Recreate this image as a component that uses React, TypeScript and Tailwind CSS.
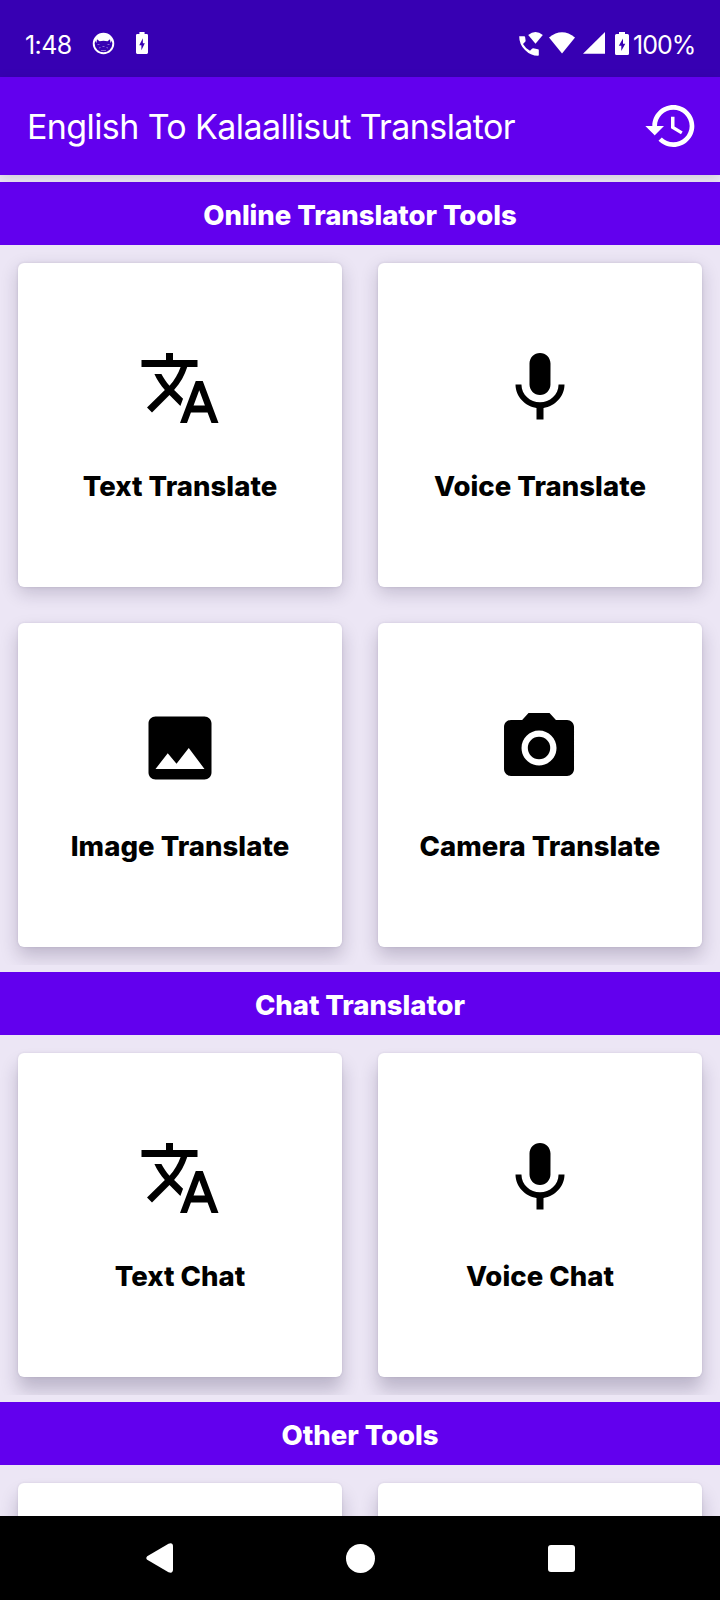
import type { ReactNode } from "react";

const icons = {
  translate: "M12.87 15.07l-2.54-2.51.03-.03c1.74-1.94 2.98-4.17 3.71-6.53H17V4h-7V2H8v2H1v1.99h11.17C11.5 7.92 10.44 9.75 9 11.35 8.07 10.32 7.3 9.19 6.69 8h-2c.73 1.63 1.73 3.17 2.98 4.56l-5.09 5.02L4 19l5-5 3.11 3.11.76-2.04zM18.5 10h-2L12 22h2l1.12-3h4.75L21 22h2l-4.5-12zm-2.62 7l1.62-4.33L19.12 17h-3.24z",
  mic: "M12 14c1.66 0 2.99-1.34 2.99-3L15 5c0-1.66-1.34-3-3-3S9 3.34 9 5v6c0 1.66 1.34 3 3 3zm5.3-3c0 3-2.54 5.1-5.3 5.1S6.7 14 6.7 11H5c0 3.41 2.72 6.23 6 6.72V21h2v-3.28c3.28-.48 6-3.3 6-6.72h-1.7z",
  image: "M21 19V5c0-1.1-.9-2-2-2H5c-1.1 0-2 .9-2 2v14c0 1.1.9 2 2 2h14c1.1 0 2-.9 2-2zM8.5 13.5l2.5 3.01L14.5 12l4.5 6H5l3.5-4.5z",
  camera: "M8.72 2L6.9 4H3.72c-1.1 0-2 .9-2 2v12c0 1.1.9 2 2 2h16c1.1 0 2-.9 2-2V6c0-1.1-.9-2-2-2h-3.17l-1.83-2H8.72zm3 15c-2.76 0-5-2.24-5-5s2.24-5 5-5 5 2.24 5 5-2.24 5-5 5zm0-8.2a3.2 3.2 0 1 0 0 6.4 3.2 3.2 0 0 0 0-6.4z",
};

type Item = { label: string; icon: keyof typeof icons };

function Card({ item, shadow }: { item?: Item; shadow: string }) {
  return (
    <div className={`m-[18px] flex h-[324px] flex-col items-center rounded-[6px] bg-white ${shadow}`}>
      {item && (
        <>
          <svg viewBox="0 0 24 24" className="mt-[83px] size-[84px] fill-black">
            <path d={icons[item.icon]} />
          </svg>
          <span className="mt-[36px] text-[27.500px] leading-[41px] font-extrabold tracking-[0.050px] whitespace-nowrap text-black">
            {item.label}
          </span>
        </>
      )}
    </div>
  );
}

function Section({ title, children }: { title: string; children: ReactNode }) {
  return (
    <section className="mt-[7px] shrink-0">
      <h2 className="h-[63px] bg-[#6200ee] text-center text-[27.500px] leading-[67px] font-extrabold tracking-[-0.050px] text-white">
        {title}
      </h2>
      <div className="grid grid-cols-2 overflow-hidden">{children}</div>
    </section>
  );
}

const soft = "shadow-[0_6px_18px_rgba(30,20,60,0.2),0_0_3px_rgba(30,20,60,0.12)]";
const medium = "shadow-[0_9px_18px_rgba(30,20,60,0.22),0_0_3px_rgba(30,20,60,0.1)]";
const deep = "shadow-[0_13px_18px_rgba(30,20,60,0.23),0_0_3px_rgba(30,20,60,0.1)]";

const Bolt = ({ className }: { className: string }) => (
  <svg viewBox="0 0 14 23" preserveAspectRatio="none" className={className} fill="white" fillRule="evenodd">
    <path d="M4 0h6v2h2.5Q14 2 14 3.5v18Q14 23 12.500 23H1.500Q0 23 0 21.500V3.500Q0 2 1.500 2H4zM8 6.500L3.800 13.800H6.300V19L10.300 11.700H8z" />
  </svg>
);

export default function App() {
  return (
    <div className="flex h-[1600px] w-[720px] flex-col overflow-hidden bg-[#ece6f5] font-['Inter',sans-serif]">
      <header className="flex h-[77px] shrink-0 items-start bg-[#3700b3] pt-[32px] pl-[25px] text-[25px] leading-[26px] text-white">
        <span className="w-[67px] tracking-[-0.6px]">1:48</span>
        <svg viewBox="0 0 23 23" className="size-[23px]">
          <circle cx="11.500" cy="11.500" r="9.800" fill="none" stroke="white" strokeWidth="1.900" />
          <path fill="white" d="M2.500 7.500C5 3 8 1.500 11.500 1.500S18 3 20.500 7.500L18.600 11 18 7.300 15.500 9.300C13 8.500 10 8.500 7.500 9.300L5 7.300 4.400 11z" />
          <path fill="none" stroke="white" strokeOpacity=".4" d="M5.500 12.500h2M15.500 12.500h2M7 16l1.500-.5M14.500 15.500L16 16M10.500 14.500h2M9 18.500h5" />
        </svg>
        <Bolt className="ml-[21px] h-[22px] w-[12px]" />
        <svg viewBox="0 0 24 24" className="ml-[371px] size-[24px] fill-white">
          <path d="M0.200 4.200H5.200Q6 4.200 6.100 5L6.600 8.500Q6.700 9.200 6.200 9.700L4 11.900Q6.500 16.400 11 18.700L13 16.700Q13.500 16.200 14.200 16.300L19 17.200Q19.800 17.400 19.800 18.200V23Q19.800 23.800 19 23.800Q11.500 23.800 6 18Q.2 12.500.2 4.200z" />
          <path d="M9.200 3Q16.500-2.800 23.800 3L16.500 11.800z" />
        </svg>
        <svg viewBox="0 0 26 22" className="ml-[6px] h-[22px] w-[26px] fill-white">
          <path d="M0 5.500Q13-5 26 5.500L13 21.500z" />
        </svg>
        <svg viewBox="0 0 22 22" className="ml-[8px] size-[22px] fill-white">
          <path d="M22 0v21.700H0z" />
        </svg>
        <Bolt className="ml-[10px] h-[23px] w-[14px]" />
        <span className="ml-[4px] tracking-[-1px]">100%</span>
      </header>

      <div className="relative flex h-[98px] shrink-0 items-start justify-between bg-[#6200ee] pt-[21px] pr-[21px] pl-[27px] shadow-[0_3px_12px_rgba(0,0,0,0.12)]">
        <h1 className="text-[34px] leading-[58px] tracking-[-0.6px] whitespace-nowrap text-white">
          English To Kalaallisut Translator
        </h1>
        <svg viewBox="0 0 24 24" className="size-[56px] shrink-0 fill-white">
          <path d="M13 3c-4.970 0-9 4.030-9 9H1l3.890 3.890.07.14L9 12H6c0-3.870 3.130-7 7-7s7 3.130 7 7-3.130 7-7 7c-1.930 0-3.680-.79-4.940-2.060l-1.420 1.420C8.270 19.990 10.510 21 13 21c4.970 0 9-4.030 9-9s-4.030-9-9-9zm-1 5v5l4.280 2.540.72-1.210-3.500-2.080V8H12z" />
        </svg>
      </div>

      <main className="flex h-[1341px] shrink-0 flex-col overflow-hidden">
        <Section title="Online Translator Tools">
          <Card shadow={soft} item={{ label: "Text Translate", icon: "translate" }} />
          <Card shadow={soft} item={{ label: "Voice Translate", icon: "mic" }} />
          <Card shadow={medium} item={{ label: "Image Translate", icon: "image" }} />
          <Card shadow={medium} item={{ label: "Camera Translate", icon: "camera" }} />
        </Section>
        <Section title="Chat Translator">
          <Card shadow={deep} item={{ label: "Text Chat", icon: "translate" }} />
          <Card shadow={deep} item={{ label: "Voice Chat", icon: "mic" }} />
        </Section>
        <Section title="Other Tools">
          <Card shadow={deep} />
          <Card shadow={deep} />
        </Section>
      </main>

      <nav className="flex h-[84px] shrink-0 items-center bg-black pl-[146px]">
        <svg viewBox="0 0 28 30" className="h-[30px] w-[28px] fill-white">
          <path d="M1.200 13.200L22.500.8Q27 -.8 27 3.500V26.500Q27 30.800 22.500 29.200L1.200 16.800Q-.6 15 1.200 13.200z" />
        </svg>
        <div className="ml-[172px] size-[29px] rounded-full bg-white" />
        <div className="ml-[173px] size-[27px] rounded-[3px] bg-white" />
      </nav>
    </div>
  );
}
